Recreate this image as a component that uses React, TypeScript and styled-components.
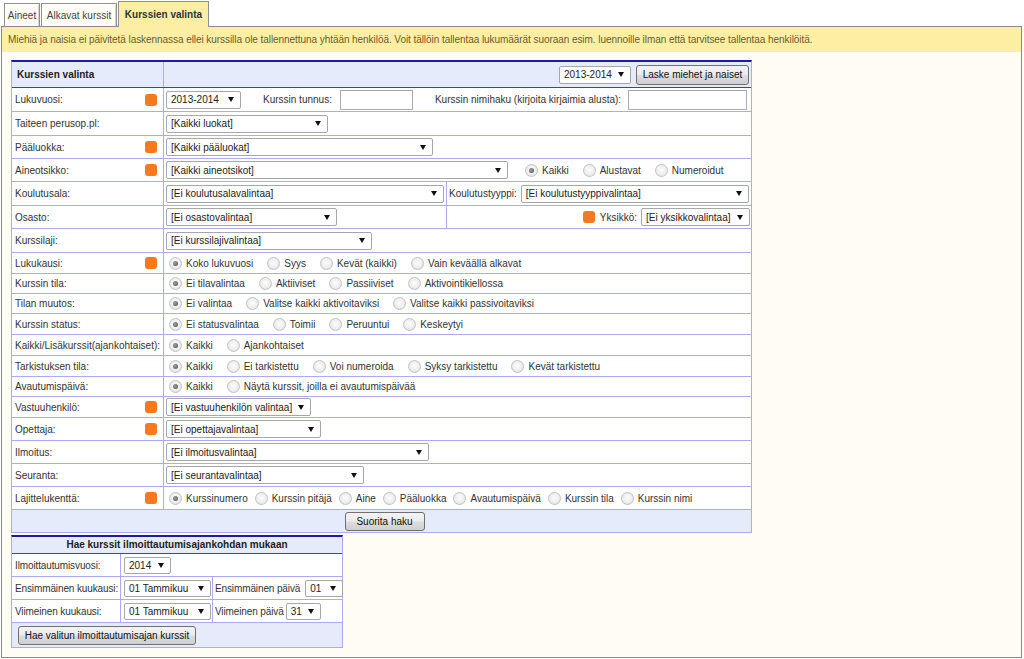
import React from 'react';
import styled, { createGlobalStyle, css } from 'styled-components';

const LINE = '#a9acee';
const NAVY = '#1b1ba3';
const DARK = '#36594f';
const HEAD_BG = '#e6ebfb';

const GlobalStyle = createGlobalStyle`
  html, body { margin: 0; padding: 0; background: #ffffff; }
  body {
    font-family: "Liberation Sans", Arial, sans-serif;
    font-size: 10px;
    color: #333;
  }
  * { box-sizing: border-box; }
`;

const Page = styled.div`
  width: 1024px;
  height: 659px;
  overflow: hidden;
`;

const TabBar = styled.div`
  display: flex;
  align-items: flex-end;
  gap: 1px;
  height: 26px;
  padding-left: 4px;
`;

const Tab = styled.div<{ $active?: boolean; $w: number }>`
  position: relative;
  z-index: 1;
  width: ${(p) => p.$w}px;
  display: flex;
  align-items: center;
  justify-content: center;
  border: 1px solid #8f8f8f;
  border-bottom: none;
  font-size: 10px;
  white-space: nowrap;
  ${(p) =>
    p.$active
      ? css`
          height: 26px;
          margin-bottom: -1px;
          background: #fcefa3;
          font-weight: 700;
          color: #333;
        `
      : css`
          height: 23px;
          background: #fffdf3;
          color: #444;
          box-shadow: inset 1px 1px 0 #ffffff, inset -1px 0 0 #d4d4d4;
        `}
`;

const Frame = styled.div`
  margin-left: 1px;
  width: 1021px;
  height: 632px;
  border: 1px solid #8a8a8a;
  background: #fffdf3;
`;

const Notice = styled.div`
  height: 25px;
  line-height: 25px;
  padding-left: 6px;
  background: #fcefa3;
  color: #6b5c2e;
  font-size: 10px;
  letter-spacing: -0.06px;
  white-space: nowrap;
`;

const MainTable = styled.div`
  margin: 8px 0 0 9px;
  width: 741px;
  background: #ffffff;
  border: 1px solid ${LINE};
  border-top: 2px solid ${NAVY};
`;

const HeaderRow = styled.div`
  display: flex;
  height: 26px;
  background: ${HEAD_BG};
  border-bottom: 1px solid ${DARK};
`;

const HeaderTitle = styled.div`
  width: 152px;
  flex: none;
  display: flex;
  align-items: center;
  padding-left: 5px;
  border-right: 1px solid ${LINE};
  font-weight: 700;
  font-size: 10px;
  color: #222;
`;

const HeaderTools = styled.div`
  flex: 1;
  display: flex;
  align-items: center;
  justify-content: flex-end;
  gap: 5px;
  padding-right: 2px;
`;

const Row = styled.div<{ $h: number }>`
  display: flex;
  height: ${(p) => p.$h}px;
  border-bottom: 1px solid ${LINE};
`;

const LabelBox = styled.div`
  width: 152px;
  flex: none;
  display: flex;
  align-items: center;
  justify-content: space-between;
  padding: 0 6px 0 3px;
  border-right: 1px solid ${LINE};
  white-space: nowrap;
  color: #333;
`;

const Dot = styled.span`
  width: 12px;
  height: 12px;
  border-radius: 3px;
  background: #f47920;
  flex: none;
`;

const Value = styled.div`
  flex: 1;
  display: flex;
  align-items: center;
  padding-left: 2px;
  white-space: nowrap;
`;

const SplitValue = styled.div`
  flex: 1;
  display: flex;
  align-items: stretch;
`;

const SubCell = styled.div<{ $w?: number; $divider?: boolean; $end?: boolean }>`
  display: flex;
  align-items: center;
  padding-left: 2px;
  white-space: nowrap;
  ${(p) => (p.$w ? css`width: ${p.$w}px; flex: none;` : css`flex: 1;`)}
  ${(p) => p.$divider && css`border-right: 1px solid ${LINE};`}
  ${(p) => p.$end && css`justify-content: flex-end; padding-right: 1px;`}
`;

const InlineText = styled.span<{ $before?: number; $after?: number }>`
  margin-left: ${(p) => p.$before ?? 0}px;
  margin-right: ${(p) => p.$after ?? 4}px;
  color: #333;
`;

const SelectBox = styled.div<{ $w: number; $h?: number }>`
  width: ${(p) => p.$w}px;
  height: ${(p) => p.$h ?? 18}px;
  flex: none;
  display: inline-flex;
  align-items: center;
  justify-content: space-between;
  padding: 0 6px 0 4px;
  background: #ffffff;
  border: 1px solid #a7a7a7;
  border-radius: 2px;
  color: #222;
  font-size: 10px;
  letter-spacing: 0;
`;

const Arrow = styled.span`
  width: 0;
  height: 0;
  border-left: 3px solid transparent;
  border-right: 3px solid transparent;
  border-top: 5px solid #111;
`;

const TextBox = styled.div<{ $w: number }>`
  width: ${(p) => p.$w}px;
  height: 20px;
  flex: none;
  background: #ffffff;
  border: 1px solid #abadb3;
  border-top-color: #a0a2a8;
`;

const Button = styled.button<{ $w: number; $h?: number }>`
  width: ${(p) => p.$w}px;
  height: ${(p) => p.$h ?? 20}px;
  padding: 0;
  border: 1px solid #707070;
  border-radius: 3px;
  background: linear-gradient(#f3f3f3 0%, #ebebeb 48%, #dddddd 52%, #cfcfcf 100%);
  font-family: "Liberation Sans", Arial, sans-serif;
  font-size: 10px;
  color: #111;
  white-space: nowrap;
`;

const Option = styled.span<{ $tight?: boolean }>`
  display: inline-flex;
  align-items: center;
  gap: 4px;
  margin-right: ${(p) => (p.$tight ? 4 : 11)}px;
  color: #333;
`;

const RadioMark = styled.span<{ $on?: boolean }>`
  position: relative;
  width: 13px;
  height: 13px;
  margin-left: 3px;
  flex: none;
  border-radius: 50%;
  border: 1px solid #c2c2c2;
  background: radial-gradient(circle at 50% 45%, #fcfcfc 0%, #eeeeee 55%, #d9d9d9 100%);
  ${(p) =>
    p.$on &&
    css`
      &::after {
        content: '';
        position: absolute;
        left: 3px;
        top: 3px;
        width: 5px;
        height: 5px;
        border-radius: 50%;
        background: radial-gradient(circle at 40% 40%, #a0a0a0 0%, #4a4a4a 100%);
      }
    `}
`;

const ButtonRow = styled.div<{ $h: number }>`
  display: flex;
  align-items: center;
  justify-content: center;
  height: ${(p) => p.$h}px;
  padding-left: 6px;
  background: ${HEAD_BG};
`;

const SubTable = styled.div`
  margin: 2px 0 0 9px;
  width: 332px;
  background: #ffffff;
  border: 1px solid ${LINE};
  border-top: 2px solid ${NAVY};
  letter-spacing: -0.12px;
`;

const SubHeader = styled.div`
  height: 17px;
  line-height: 16px;
  text-align: center;
  font-weight: 700;
  color: #222;
  letter-spacing: 0;
  background: ${HEAD_BG};
  border-bottom: 1px solid ${DARK};
`;

const SubLabel = styled.div`
  width: 109px;
  flex: none;
  display: flex;
  align-items: center;
  padding-left: 3px;
  border-right: 1px solid ${LINE};
  white-space: nowrap;
  overflow: hidden;
  color: #333;
`;

const SubValue = styled.div<{ $w?: number; $divider?: boolean }>`
  display: flex;
  align-items: center;
  padding-left: 3px;
  white-space: nowrap;
  ${(p) => (p.$w ? css`width: ${p.$w}px; flex: none;` : css`flex: 1;`)}
  ${(p) => p.$divider && css`border-right: 1px solid ${LINE};`}
`;

const SubTextCell = styled(SubValue)`
  padding-left: 2px;
`;

const SubButtonRow = styled.div`
  display: flex;
  align-items: center;
  height: 24px;
  padding-left: 6px;
  letter-spacing: 0;
  background: ${HEAD_BG};
`;

function Select({ w, value, h }: { w: number; value: string; h?: number }) {
  return (
    <SelectBox $w={w} $h={h}>
      <span>{value}</span>
      <Arrow />
    </SelectBox>
  );
}

function Label({ children, dot }: { children: React.ReactNode; dot?: boolean }) {
  return (
    <LabelBox>
      <span>{children}</span>
      {dot && <Dot />}
    </LabelBox>
  );
}

function Radios({ items, tight }: { items: string[]; tight?: boolean }) {
  return (
    <>
      {items.map((t, i) => (
        <Option key={t} $tight={tight}>
          <RadioMark $on={i === 0} />
          {t}
        </Option>
      ))}
    </>
  );
}

type RadioRowDef = { label: string; h: number; dot?: boolean; items: string[] };

const radioRows: RadioRowDef[] = [
  { label: 'Lukukausi:', h: 21, dot: true, items: ['Koko lukuvuosi', 'Syys', 'Kevät (kaikki)', 'Vain keväällä alkavat'] },
  { label: 'Kurssin tila:', h: 20, items: ['Ei tilavalintaa', 'Aktiiviset', 'Passiiviset', 'Aktivointikiellossa'] },
  { label: 'Tilan muutos:', h: 20, items: ['Ei valintaa', 'Valitse kaikki aktivoitaviksi', 'Valitse kaikki passivoitaviksi'] },
  { label: 'Kurssin status:', h: 21, items: ['Ei statusvalintaa', 'Toimii', 'Peruuntui', 'Keskeytyi'] },
  { label: 'Kaikki/Lisäkurssit(ajankohtaiset):', h: 21, items: ['Kaikki', 'Ajankohtaiset'] },
  { label: 'Tarkistuksen tila:', h: 21, items: ['Kaikki', 'Ei tarkistettu', 'Voi numeroida', 'Syksy tarkistettu', 'Kevät tarkistettu'] },
  { label: 'Avautumispäivä:', h: 20, items: ['Kaikki', 'Näytä kurssit, joilla ei avautumispäivää'] },
];

type SelectRowDef = { label: string; h: number; dot?: boolean; w: number; value: string };

const selectRows: SelectRowDef[] = [
  { label: 'Vastuuhenkilö:', h: 21, dot: true, w: 145, value: '[Ei vastuuhenkilön valintaa]' },
  { label: 'Opettaja:', h: 23, dot: true, w: 155, value: '[Ei opettajavalintaa]' },
  { label: 'Ilmoitus:', h: 23, w: 263, value: '[Ei ilmoitusvalintaa]' },
  { label: 'Seuranta:', h: 23, w: 198, value: '[Ei seurantavalintaa]' },
];

export default function App() {
  return (
    <Page>
      <GlobalStyle />
      <TabBar>
        <Tab $w={36}>Aineet</Tab>
        <Tab $w={76}>Alkavat kurssit</Tab>
        <Tab $w={91} $active>
          Kurssien valinta
        </Tab>
      </TabBar>
      <Frame>
        <Notice>
          Miehiä ja naisia ei päivitetä laskennassa ellei kurssilla ole tallennettuna yhtään henkilöä. Voit tällöin
          tallentaa lukumäärät suoraan esim. luennoille ilman että tarvitsee tallentaa henkilöitä.
        </Notice>

        <MainTable>
          <HeaderRow>
            <HeaderTitle>Kurssien valinta</HeaderTitle>
            <HeaderTools>
              <Select w={72} value="2013-2014" />
              <Button $w={113}>Laske miehet ja naiset</Button>
            </HeaderTools>
          </HeaderRow>

          <Row $h={24}>
            <Label dot>Lukuvuosi:</Label>
            <Value>
              <Select w={75} value="2013-2014" />
              <InlineText $before={22} $after={8}>
                Kurssin tunnus:
              </InlineText>
              <TextBox $w={73} />
              <InlineText $before={22} $after={7}>
                Kurssin nimihaku (kirjoita kirjaimia alusta):
              </InlineText>
              <TextBox $w={119} />
            </Value>
          </Row>

          <Row $h={24}>
            <Label>Taiteen perusop.pl:</Label>
            <Value>
              <Select w={162} value="[Kaikki luokat]" />
            </Value>
          </Row>

          <Row $h={23}>
            <Label dot>Pääluokka:</Label>
            <Value>
              <Select w={267} value="[Kaikki pääluokat]" />
            </Value>
          </Row>

          <Row $h={23}>
            <Label dot>Aineotsikko:</Label>
            <Value>
              <Select w={342} value="[Kaikki aineotsikot]" />
              <InlineText $before={14} $after={0} />
              <Radios items={['Kaikki', 'Alustavat', 'Numeroidut']} />
            </Value>
          </Row>

          <Row $h={24}>
            <Label>Koulutusala:</Label>
            <SplitValue>
              <SubCell $w={283} $divider>
                <Select w={278} value="[Ei koulutusalavalintaa]" />
              </SubCell>
              <SubCell>
                <InlineText>Koulutustyyppi:</InlineText>
                <Select w={228} value="[Ei koulutustyyppivalintaa]" />
              </SubCell>
            </SplitValue>
          </Row>

          <Row $h={23}>
            <Label>Osasto:</Label>
            <SplitValue>
              <SubCell $w={283} $divider>
                <Select w={171} value="[Ei osastovalintaa]" />
              </SubCell>
              <SubCell $end>
                <Dot />
                <InlineText $before={5} $after={4}>
                  Yksikkö:
                </InlineText>
                <Select w={109} value="[Ei yksikkovalintaa]" />
              </SubCell>
            </SplitValue>
          </Row>

          <Row $h={24}>
            <Label>Kurssilaji:</Label>
            <Value>
              <Select w={206} value="[Ei kurssilajivalintaa]" />
            </Value>
          </Row>

          {radioRows.map((r) => (
            <Row key={r.label} $h={r.h}>
              <Label dot={r.dot}>{r.label}</Label>
              <Value>
                <Radios items={r.items} />
              </Value>
            </Row>
          ))}

          {selectRows.map((r) => (
            <Row key={r.label} $h={r.h}>
              <Label dot={r.dot}>{r.label}</Label>
              <Value>
                <Select w={r.w} value={r.value} />
              </Value>
            </Row>
          ))}

          <Row $h={23}>
            <Label dot>Lajittelukenttä:</Label>
            <Value>
              <Radios
                tight
                items={['Kurssinumero', 'Kurssin pitäjä', 'Aine', 'Pääluokka', 'Avautumispäivä', 'Kurssin tila', 'Kurssin nimi']}
              />
            </Value>
          </Row>

          <ButtonRow $h={22}>
            <Button $w={80} $h={19}>
              Suorita haku
            </Button>
          </ButtonRow>
        </MainTable>

        <SubTable>
          <SubHeader>Hae kurssit ilmoittautumisajankohdan mukaan</SubHeader>
          <Row $h={23}>
            <SubLabel>Ilmoittautumisvuosi:</SubLabel>
            <SubValue>
              <Select w={47} h={17} value="2014" />
            </SubValue>
          </Row>
          <Row $h={23}>
            <SubLabel>Ensimmäinen kuukausi:</SubLabel>
            <SubValue $w={92} $divider>
              <Select w={87} h={17} value="01 Tammikuu" />
            </SubValue>
            <SubTextCell>
              <InlineText $after={5}>Ensimmäinen päivä</InlineText>
              <Select w={38} h={17} value="01" />
            </SubTextCell>
          </Row>
          <Row $h={23}>
            <SubLabel>Viimeinen kuukausi:</SubLabel>
            <SubValue $w={92} $divider>
              <Select w={87} h={17} value="01 Tammikuu" />
            </SubValue>
            <SubTextCell>
              <InlineText $after={2}>Viimeinen päivä</InlineText>
              <Select w={35} h={17} value="31" />
            </SubTextCell>
          </Row>
          <SubButtonRow>
            <Button $w={178} $h={19}>
              Hae valitun ilmoittautumisajan kurssit
            </Button>
          </SubButtonRow>
        </SubTable>
      </Frame>
    </Page>
  );
}
